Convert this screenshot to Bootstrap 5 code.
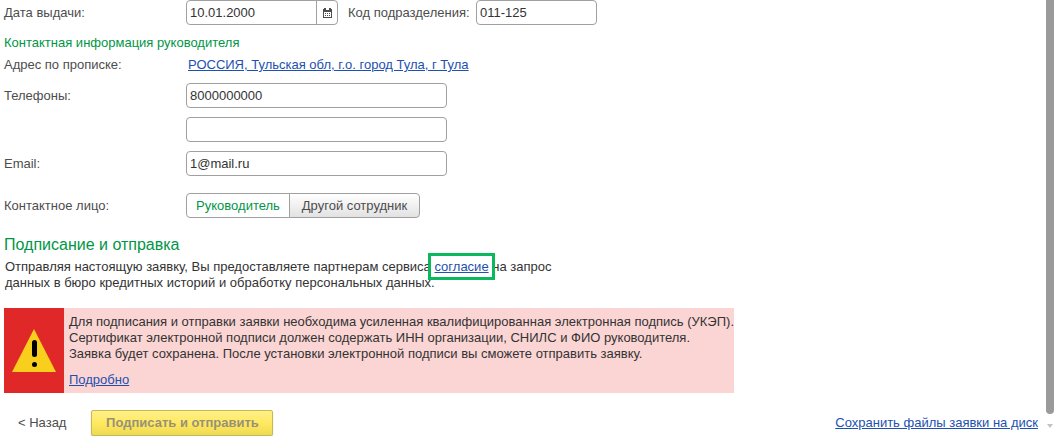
<!DOCTYPE html>
<html lang="ru">
<head>
<meta charset="utf-8">
<meta name="viewport" content="width=device-width, initial-scale=1">
<title>Подписание и отправка заявки</title>
<link href="https://cdn.jsdelivr.net/npm/bootstrap@5.3.0/dist/css/bootstrap.min.css" rel="stylesheet">
<style>
  body { font: 13px/16px "Liberation Sans", Arial, sans-serif; color: #333; background: #fff; }
  label, .field-label { color: #4d4d4d; }
  a { color: #1d50b0; }
  a:hover { color: #123a85; }
  .form-rows { display: grid; gap: 9px; }
  .form-line { display: grid; grid-template-columns: 182px minmax(0, 1fr); align-items: center; }
  .form-control { height: 25px; padding: 0 3px; font-size: 13px; line-height: 16px; color: #333; border-color: #a0a0a0; border-radius: 4px; }
  .w-long { width: 261px; }
  .w-date { width: 152px; }
  .w-code { width: 121px; }
  .date-btn { width: 22px; height: 25px; padding: 0; border: 1px solid #a0a0a0; border-radius: 4px; line-height: 0; }
  .code-label { width: 128px; margin-left: 10px; }
  .green-title { color: #009646; font-size: 13px; line-height: 16px; font-weight: 400; margin: 10px 0 6px; }
  .address-line { margin-bottom: 10px; }
  .address-line a { margin-left: 2px; }
  .section-gap { margin-top: 17px; }
  .section-title { color: #009646; font-size: 16px; line-height: 20px; font-weight: 400; margin: 17px 0 4px; }
  .consent-text { margin: 0; padding-left: 1px; }
  .seg { justify-self: start; }
  .seg .btn { height: 25px; padding: 3px 0; width: 131px; flex: none; font-size: 13px; line-height: 17px; color: #4d4d4d; border-color: #a0a0a0; border-radius: 4px; background: linear-gradient(#fff, #e2e2e2); }
  .seg .btn-check:checked + .btn { width: 104px; background: #fff; color: #009646; border-color: #a0a0a0; }
  .consent { outline: 3px solid #0cb85c; outline-offset: 3px; }
  .notice { width: 730px; max-width: 100%; background: #fbd5d3; }
  .notice-icon { width: 60px; background: #e02828; }
  .notice-text { padding: 6px 0 5px 5px; }
  .notice-text p { margin-bottom: 10px; }
  @media (min-width: 768px) { .notice-text p { white-space: nowrap; } }
  .back-btn { font-size: 13px; line-height: 16px; color: #4d4d4d; padding: 0 14px; border: 0; margin-right: 11px; }
  .sign-btn, .sign-btn:disabled { width: 182px; height: 26px; padding: 0; font-size: 13px; line-height: 16px; font-weight: 700; color: #97917a; border: 1px solid #c9b74f; border-radius: 2px; background: linear-gradient(#fff08a, #ffe85c 55%, #eed955); box-shadow: 0 1px 1px #b8b8b8; opacity: 1; }
  .scroll-col { width: 8px; margin-right: 7px; }
  .scroll-thumb { height: 414px; background: #9a9a9a; border-radius: 0 0 4px 4px; }
</style>
</head>
<body>
<div class="d-flex">
  <main class="flex-grow-1 ps-1">
    <form>
      <div class="form-line">
        <label for="issued">Дата выдачи:</label>
        <div class="d-flex align-items-center">
          <div class="input-group w-date flex-nowrap">
            <input class="form-control" id="issued" type="text" value="10.01.2000">
            <button class="btn date-btn" type="button" aria-label="Календарь">
              <svg width="9" height="10" viewBox="0 0 9 10" shape-rendering="crispEdges" aria-hidden="true">
                <path d="M0 1h9v9H0z" fill="#4d4d4d"/>
                <path d="M1 0h2v1H1zM6 0h2v1H6z" fill="#4d4d4d"/>
                <path d="M1 4h7v5H1zM3 1h3v1H3z" fill="#fff"/>
                <path d="M2 5h1v1H2zM4 5h1v1H4zM6 5h1v1H6zM2 7h1v1H2zM4 7h1v1H4zM6 7h1v1H6z" fill="#4d4d4d"/>
              </svg>
            </button>
          </div>
          <label class="code-label text-nowrap" for="code">Код подразделения:</label>
          <input class="form-control w-code" id="code" type="text" value="011-125">
        </div>
      </div>

      <h2 class="green-title">Контактная информация руководителя</h2>

      <div class="form-line address-line">
        <span class="field-label">Адрес по прописке:</span>
        <div><a href="#">РОССИЯ, Тульская обл, г.о. город Тула, г Тула</a></div>
      </div>

      <div class="form-rows">
        <div class="form-line">
          <label for="phone1" id="phones-label">Телефоны:</label>
          <div class="form-rows">
            <input class="form-control w-long" id="phone1" type="tel" value="8000000000">
          </div>
        </div>
        <div class="form-line">
          <span></span>
          <input class="form-control w-long" id="phone2" type="tel" aria-labelledby="phones-label">
        </div>
        <div class="form-line">
          <label for="email">Email:</label>
          <input class="form-control w-long" id="email" type="email" value="1@mail.ru">
        </div>
      </div>

      <div class="form-line section-gap">
        <span class="field-label" id="contact-label">Контактное лицо:</span>
        <div class="btn-group seg" role="group" aria-labelledby="contact-label">
          <input class="btn-check" type="radio" name="contact" id="head" checked>
          <label class="btn" for="head">Руководитель</label>
          <input class="btn-check" type="radio" name="contact" id="other">
          <label class="btn" for="other">Другой сотрудник</label>
        </div>
      </div>

      <h1 class="section-title">Подписание и отправка</h1>
      <p class="consent-text">Отправляя настоящую заявку, Вы предоставляете партнерам сервиса <a class="consent" href="#">согласие</a> на запрос<br>данных в бюро кредитных историй и обработку персональных данных.</p>

      <div class="notice section-gap d-flex" role="alert">
        <div class="notice-icon d-flex align-items-center justify-content-center flex-shrink-0">
          <svg width="44" height="43" viewBox="0 0 44 43" aria-hidden="true">
            <path d="M22 0 44 43H0z" fill="#f8cf1c"/>
            <rect x="20" y="11" width="5" height="17" rx="2.5"/>
            <circle cx="22.5" cy="35.5" r="2.5"/>
          </svg>
        </div>
        <div class="notice-text">
          <p>Для подписания и отправки заявки необходима усиленная квалифицированная электронная подпись (УКЭП).<br>Сертификат электронной подписи должен содержать ИНН организации, СНИЛС и ФИО руководителя.<br>Заявка будет сохранена. После установки электронной подписи вы сможете отправить заявку.</p>
          <a href="#">Подробно</a>
        </div>
      </div>

      <div class="section-gap d-flex align-items-center">
        <button class="btn back-btn" type="button">&lt; Назад</button>
        <button class="btn sign-btn" type="submit" disabled>Подписать и отправить</button>
        <a class="ms-auto me-2" href="#">Сохранить файлы заявки на диск</a>
      </div>
    </form>
  </main>
  <div class="scroll-col d-flex flex-column align-items-center flex-shrink-0" aria-hidden="true">
    <div class="scroll-thumb w-100"></div>
    <svg class="mt-2" width="6" height="8" viewBox="0 0 6 8"><path d="M0 2h6L3 6z" fill="#c4c4c4"/></svg>
  </div>
</div>
<script src="https://cdn.jsdelivr.net/npm/bootstrap@5.3.0/dist/js/bootstrap.bundle.min.js"></script>
</body>
</html>
